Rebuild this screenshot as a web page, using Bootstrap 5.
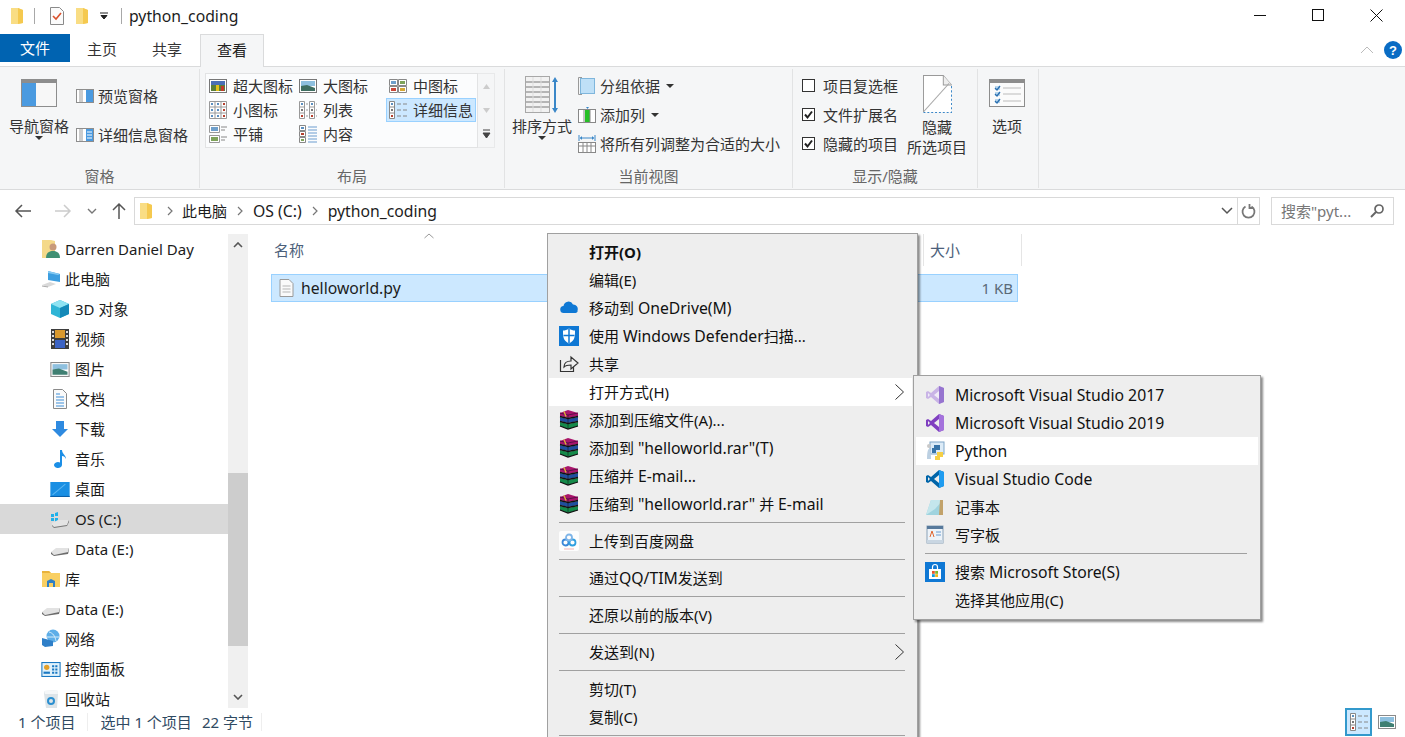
<!DOCTYPE html>
<html lang="zh-CN">
<head>
  <meta charset="UTF-8" />
  <title>python_coding</title>
  <link href="https://cdn.jsdelivr.net/npm/bootstrap@5.3.0/dist/css/bootstrap.min.css" rel="stylesheet">
  <style>
    html, body { height: 737px; overflow: hidden; }
    body { position: relative; background: #fff; color: #1c1c1c; font: 15px/20px "Noto Sans", "Noto Sans CJK SC", sans-serif; }
    svg { display: block; flex: none; }
    .lat { font-size: 15.75px; }

    .title-bar { height: 34px; padding-bottom: 3px; }
    .qa-sep { width: 1px; height: 16px; background: #a8a8a8; }
    .qa-folder1 { margin-left: 10px; }
    .qa-sep1 { margin-left: 10px; }
    .qa-check { margin-left: 14px; }
    .qa-folder2 { margin-left: 10px; }
    .qa-drop { margin-left: 11px; }
    .qa-sep2 { margin-left: 13px; }
    .win-title { margin-left: 7px; }
    .win-btn { width: 58px; }
    .tab-row { height: 32px; }
    .tab-file { width: 70px; height: 28px; background: #0063b1; color: #fff; }
    .tab-plain { height: 30px; color: #333; }
    .tab-home { margin-left: 17px; }
    .tab-share { margin-left: 35px; }
    .tab-on { width: 64px; height: 33px; margin-left: 18px; padding-bottom: 2px; background: #f5f6f7; border: 1px solid #dadbdc; border-bottom: 0; position: relative; z-index: 1; color: #222; }
    .tab-tools { height: 28px; margin-top: 2px; }
    .help-btn { margin: 0 3px 0 10px; }

    .ribbon { height: 124px; background: #f5f6f7; border-top: 1px solid #dadbdc; border-bottom: 1px solid #dadbdc; color: #333; }
    .rb-group { display: flex; flex-direction: column; border-right: 1px solid #e2e3e4; margin-top: 2px; height: 119px; }
    .rb-body { height: 97px; display: flex; }
    .rb-label { height: 22px; line-height: 20px; text-align: center; color: #666; }
    .g-pane { width: 200px; } .g-layout { width: 305px; } .g-view { width: 288px; } .g-show { width: 185px; } .g-opt { width: 61px; }
    .big-btn { width: 60px; display: flex; flex-direction: column; align-items: center; white-space: nowrap; }
    .big-nav { margin-left: 9px; padding-top: 10px; }
    .big-nav svg, .big-opt svg { margin-bottom: 9px; }
    .big-sort { margin-left: 7px; padding-top: 7px; }
    .big-sort svg { margin-bottom: 2px; }
    .big-hide { margin-left: 9px; padding-top: 6px; }
    .big-hide svg { margin-bottom: 4px; }
    .big-opt { width: 58px; padding-top: 10px; }
    .rb-caret { width: 0; height: 0; border: 4px solid transparent; border-top-color: #333; border-bottom: 0; }
    .small-row .rb-caret { margin-left: 2px; }
    .pane-col { margin-left: 7px; padding-top: 17px; }
    .pane-row + .pane-row { margin-top: 19px; }
    .view-col { margin-left: 6px; padding-top: 2px; }
    .check-col { margin-left: 9px; padding-top: 2px; }
    .small-row { height: 29px; display: flex; align-items: center; white-space: nowrap; }
    .gallery { width: 273px; height: 75px; margin: 4px 0 0 5px; background: #fbfcfd; border: 1px solid #e2e3e4; display: grid; grid-template-columns: 90px 90px 90px; grid-auto-rows: 24px; }
    .gal-item { display: flex; align-items: center; gap: 6px; padding-left: 2px; white-space: nowrap; border: 1px solid transparent; }
    .gal-item.picked { background: #cce8ff; border-color: #99d1ff; }
    .gal-scroll { width: 17px; height: 75px; margin-top: 4px; border: 1px solid #e8e9ea; border-left: 0; }

    .addr-row { height: 38px; padding-top: 7px; }
    .addr-btns { width: 134px; height: 28px; }
    .btn-back { margin-left: 14px; }
    .btn-fwd { margin-left: 22px; }
    .btn-hist { margin-left: 15px; }
    .btn-up { margin-left: 15px; }
    .addr-box { width: 1126px; height: 28px; border: 1px solid #d9d9d9; }
    .crumb-first { margin: 0 9px 0 14px; }
    .crumb-next { margin: 0 10px; }
    .addr-drop { margin-right: 4px; }
    .addr-refresh { width: 22px; height: 26px; border-left: 1px solid #d9d9d9; }
    .search-box { width: 123px; height: 28px; margin-left: 11px; padding-left: 9px; border: 1px solid #d9d9d9; color: #777; }

    .main-row { height: 480px; }
    .nav-pane { width: 228px; padding-top: 6px; }
    .nav-item { height: 30px; display: flex; align-items: center; white-space: nowrap; }
    .lv1 { padding-left: 41px; gap: 4px; }
    .lv2 { padding-left: 50px; gap: 5px; }
    .nav-item.here { background: #d9d9d9; }
    .scroll-col { width: 20px; height: 474px; margin-top: 6px; background: #f0f0f0; }
    .scroll-arrow { height: 22px; }
    .scroll-gap { height: 217px; }
    .scroll-thumb { height: 173px; background: #cdcdcd; }
    .scroll-rest { height: 40px; }

    .file-pane { padding: 6px 0 0 23px; position: relative; }
    .col-head { height: 32px; color: #4c607a; }
    .col-name { width: 652px; padding-left: 3px; }
    .col-size { width: 99px; padding-left: 6px; border-left: 1px solid #e5e5e5; border-right: 1px solid #e5e5e5; }
    .sort-caret { position: absolute; left: 176px; top: 5px; }
    .file-row { width: 747px; height: 28px; margin-top: 8px; background: #cce8ff; border: 1px solid #99d1ff; padding: 0 4px 0 7px; }
    .file-icon { margin-right: 7px; }
    .file-size { color: #5a6a78; }

    .status-bar { height: 29px; padding-bottom: 2px; color: #2f4a62; white-space: nowrap; }
    .st-count { margin-left: 18px; }
    .st-sep { width: 1px; height: 18px; background: #eee; }
    .st-sep1 { margin: 0 12px; }
    .st-bytes { margin-left: 10px; }
    .view-on { width: 27px; height: 28px; background: #cce8ff; border: 2px solid #3399cc; }
    .view-pic { margin: 0 9px 0 6px; }

    .ctx-menu { position: absolute; background: #eee; border: 1px solid #a0a0a0; box-shadow: 2px 2px 2px rgba(0,0,0,.45); color: #111; white-space: nowrap; }
    .menu-main { left: 547px; top: 233px; width: 371px; padding: 4px 1px; }
    .menu-sub { left: 913px; top: 375px; width: 348px; padding: 5px 2px; z-index: 2; }
    .menu-row { height: 28px; display: flex; align-items: center; }
    .menu-main .menu-row { padding-left: 10px; }
    .menu-sub .menu-row { padding-left: 9px; }
    .menu-row.hot { background: #fff; }
    .menu-icon { width: 20px; height: 20px; flex: none; margin-right: 10px; }
    .menu-arrow { margin-left: auto; margin-right: 12px; }
    .menu-sep { height: 1px; background: #a0a0a0; margin: 4px 11px 4px 10px; }
    .menu-sub .menu-sep { margin-left: 9px; }
    .menu-main .hot { margin-right: 4px; }
    .menu-main .hot .menu-arrow { margin-right: 8px; }
  </style>
</head>
<body>
  <svg width="0" height="0" class="position-absolute">
    <defs>
      <symbol id="i-folder" viewBox="0 0 14 18"><path d="M1 1h7l5 2v13l-5 1H1z" fill="#f9dd84"/><path d="M8 1l5 2v13l-5 1z" fill="#f5c94f"/></symbol>
      <symbol id="i-check" viewBox="0 0 16 20"><path d="M1.500 1.500h9l4 4v13h-13z" fill="#fbfbfb" stroke="#8a8a8a"/><path d="M4 10l3 3 5-6" fill="none" stroke="#d9512c" stroke-width="1.600"/></symbol>
      <symbol id="i-lpane" viewBox="0 0 36 28"><rect x=".5" y=".5" width="35" height="27" fill="#f4f4f4" stroke="#8d8d8d"/><rect x="1" y="1" width="34" height="3" fill="#8d8d8d"/><rect x="1" y="4" width="14" height="23" fill="#4a9ae0"/><rect x="15" y="4" width="20" height="23" fill="#f7f7f7"/></symbol>
      <symbol id="i-rpane" viewBox="0 0 18 14"><rect x=".5" y=".5" width="17" height="13" fill="#fff" stroke="#8d8d8d"/><path d="M6 1v12M4 1v12" stroke="#9a9a9a"/><rect x="10" y="1" width="7" height="12" fill="#4a9ae0"/></symbol>
      <symbol id="i-dpane" viewBox="0 0 18 14"><rect x=".5" y=".5" width="17" height="13" fill="#fff" stroke="#8d8d8d"/><path d="M6 1v12M4 1v12" stroke="#9a9a9a"/><rect x="10" y="1" width="7" height="12" fill="#4a9ae0"/><path d="M11 4h5M11 7h5M11 10h5" stroke="#fff"/></symbol>
      <symbol id="g-xl" viewBox="0 0 18 14"><rect x=".5" y=".5" width="17" height="13" fill="#fff" stroke="#777"/><rect x="2" y="2" width="14" height="10" fill="#5a7f3a"/><path d="M2 2h14v4H2z" fill="#4a6fb5"/><path d="M7 12V6h3v6z" fill="#e2c21a"/><rect x="12" y="7" width="3" height="5" fill="#c43a2b"/></symbol>
      <symbol id="g-lg" viewBox="0 0 18 14"><rect x=".5" y=".5" width="17" height="13" fill="#fff" stroke="#777"/><rect x="2" y="2" width="14" height="5" fill="#8ec0df"/><path d="M2 7l6-1 8 3v3H2z" fill="#3f6f62"/></symbol>
      <symbol id="g-md" viewBox="0 0 18 14"><path d="M.5.500h8v6h-8zM9.500.500h8v6h-8zM.5 7.500h8v6h-8zM9.500 7.500h8v6h-8z" fill="#fff" stroke="#888"/><path d="M2 2h5v3H2z" fill="#6e9fcb"/><path d="M11 2h5v3h-5z" fill="#7ea35a"/><path d="M2 9h5v3H2z" fill="#c9473a"/><path d="M11 9h5v3h-5z" fill="#d5a733"/></symbol>
      <symbol id="g-sm" viewBox="0 0 18 18"><path d="M.5.500h17v17H.5z" fill="#fff" stroke="#999"/><path d="M6 0v18M12 0v18M0 6h18M0 12h18" stroke="#999"/><path d="M2 2h2v2H2zM8 2h2v2H8zM2 8h2v2H2zM8 8h2v2H8zM2 14h2v2H2zM8 14h2v2H8z" fill="#5b8fc0"/><path d="M14 2h2v2h-2zM14 8h2v2h-2zM14 14h2v2h-2z" fill="#b5402f"/></symbol>
      <symbol id="g-list" viewBox="0 0 18 18"><path d="M.5.500h5v17h-5zM10.500.500h5v17h-5z" fill="#fff" stroke="#999"/><path d="M1 6h4M1 12h4M11 6h4M11 12h4" stroke="#999"/><path d="M2 2h2v2H2zM12 2h2v2h-2z" fill="#5b8fc0"/><path d="M2 8h2v2H2zM12 8h2v2h-2z" fill="#777"/><path d="M2 14h2v2H2zM12 14h2v2h-2z" fill="#b5402f"/><path d="M7 3h2M7 9h2M7 15h2M17 3h1M17 9h1M17 15h1" stroke="#999"/></symbol>
      <symbol id="g-det" viewBox="0 0 18 18"><path d="M.5.500h5v17h-5z" fill="#fff" stroke="#888"/><path d="M1 6h4M1 12h4" stroke="#888"/><path d="M2 2h2v2H2z" fill="#5b8fc0"/><path d="M2 8h2v2H2z" fill="#777"/><path d="M2 14h2v2H2z" fill="#b5402f"/><path d="M8 3h4M14 3h4M8 9h4M14 9h4M8 15h4M14 15h4" stroke="#888"/></symbol>
      <symbol id="g-tile" viewBox="0 0 18 18"><path d="M.5.500h10v7H.5zM.5 10.500h10v7H.5z" fill="#fff" stroke="#999"/><path d="M2 2h7v4H2z" fill="#6e9fcb"/><path d="M2 12h7v4H2z" fill="#7ea35a"/><path d="M12 2h6M12 5h4M12 12h6M12 15h4" stroke="#888"/></symbol>
      <symbol id="g-con" viewBox="0 0 18 18"><path d="M.5.500h6v5h-6zM.5 6.500h6v5h-6zM.5 12.500h6v5h-6z" fill="#fff" stroke="#888"/><path d="M2 2h3v2H2z" fill="#5b8fc0"/><path d="M2 8h3v2H2z" fill="#b5402f"/><path d="M2 14h3v2H2z" fill="#7ea35a"/><path d="M9 2h9M9 5h9M9 8h9M9 11h9M9 14h9M9 17h9" stroke="#6a9ccf"/></symbol>
      <symbol id="i-sort" viewBox="0 0 34 38"><rect x=".5" y=".5" width="24" height="36" fill="#f2f2f2" stroke="#a8a8a8"/><path d="M1 6h23M1 11h23M1 16h23M1 21h23M1 26h23M1 31h23" stroke="#b5b5b5" stroke-width="2"/><path d="M8 1v35M16 1v35" stroke="#ddd"/><path d="M30 3v32" stroke="#3a87c8" stroke-width="2"/><path d="M27 6l3-5 3 5zM27 32l3 5 3-5z" fill="#3a87c8"/></symbol>
      <symbol id="i-group" viewBox="0 0 18 18"><path d="M4 .5H.5v17H4" fill="none" stroke="#999"/><rect x="2.500" y="1.500" width="14" height="15" fill="#bfe0f7" stroke="#7fb6dc"/></symbol>
      <symbol id="i-addcol" viewBox="0 0 18 18"><rect x=".5" y="3.500" width="17" height="13" fill="#fff" stroke="#888"/><rect x="7" y="4" width="5" height="12" fill="#26c026"/><path d="M6 4v12M12 4v12" stroke="#888"/><path d="M8 1h3l-1.500 2z" fill="#3a87c8"/></symbol>
      <symbol id="i-fit" viewBox="0 0 18 18"><path d="M1 0v6M17 0v6" stroke="#3a87c8"/><path d="M2 3h14" stroke="#3a87c8"/><path d="M2 3l2-2v4zM16 3l-2-2v4z" fill="#3a87c8"/><rect x=".5" y="7.500" width="17" height="10" fill="#fff" stroke="#888"/><path d="M0 11h18M5 8v10M9 8v10M13 8v10" stroke="#888"/></symbol>
      <symbol id="i-cb-on" viewBox="0 0 13 13"><rect x=".5" y=".5" width="12" height="12" fill="#fff" stroke="#333"/><path d="M3 6.500l2.500 3L10 3.500" fill="none" stroke="#222" stroke-width="2"/></symbol>
      <symbol id="i-cb-off" viewBox="0 0 13 13"><rect x=".5" y=".5" width="12" height="12" fill="#fff" stroke="#333"/></symbol>
      <symbol id="i-hide" viewBox="0 0 30 36" preserveAspectRatio="none"><path d="M.5 35V.5H21l8.500 9V35z" fill="#fff"/><path d="M.5 35V.5H21l8.500 9" fill="none" stroke="#999"/><path d="M21 .5v9h8.500" fill="#eee" stroke="#999"/><path d="M.5 35L27 8" stroke="#aaa"/><path d="M.5 35.500h29V9.500" fill="none" stroke="#3a87c8" stroke-dasharray="2 2"/></symbol>
      <symbol id="i-opts" viewBox="0 0 36 28"><rect x=".5" y=".5" width="35" height="27" fill="#fbfbfb" stroke="#8d8d8d"/><rect x="1" y="1" width="34" height="3" fill="#8d8d8d"/><path d="M14 9h18M14 15h18M14 22h18" stroke="#bbb"/><path d="M6 7h5v4H6zM6 13h5v4H6zM6 20h5v4H6z" fill="#b9d7ee"/><path d="M6 9l2 2 3-4M6 15l2 2 3-4M6 22l2 2 3-4" fill="none" stroke="#2a6fb0" stroke-width="1.300"/></symbol>
      <symbol id="i-user" viewBox="0 0 20 20"><path d="M1 1h9l4 1v16l-4 1H1z" fill="#f4d98a"/><circle cx="12" cy="8" r="3.500" fill="#c89a7a"/><path d="M5 19c0-5 3-7 7-7s7 2 7 7z" fill="#3f8f72"/></symbol>
      <symbol id="i-pc" viewBox="0 0 20 20"><path d="M7 2l12 3v8l-12-2z" fill="#3c9ee0"/><path d="M7 2l12 3-2 1-10-2z" fill="#85c9f2"/><path d="M1 16l8-3 6 2-8 3z" fill="#d9d9d9"/><path d="M1 17l6 1" stroke="#aaa"/></symbol>
      <symbol id="i-3d" viewBox="0 0 20 20"><path d="M10 1l9 4v10l-9 4-9-4V5z" fill="#2fb5d6"/><path d="M10 1l9 4-9 4-9-4z" fill="#8fe3f2"/><path d="M10 9l9-4v10l-9 4z" fill="#1489b8"/></symbol>
      <symbol id="i-video" viewBox="0 0 18 20"><rect width="18" height="20" fill="#3d3d3d"/><rect x="4" y="1" width="10" height="8" fill="#d9992e"/><rect x="4" y="11" width="10" height="8" fill="#3b63c4"/><path d="M1 2h2v2H1zM1 6h2v2H1zM1 10h2v2H1zM1 14h2v2H1zM15 2h2v2h-2zM15 6h2v2h-2zM15 10h2v2h-2zM15 14h2v2h-2z" fill="#ddd"/></symbol>
      <symbol id="i-pic" viewBox="0 0 18 14"><rect x=".5" y=".5" width="17" height="13" fill="#fff" stroke="#8a8a8a"/><rect x="2" y="2" width="14" height="5" fill="#8ec0df"/><path d="M2 7l6-1 8 3v3H2z" fill="#3f7f72"/></symbol>
      <symbol id="i-doc" viewBox="0 0 16 20"><path d="M1.500.5h9l4 4v15h-13z" fill="#fafafa" stroke="#8a8a8a"/><path d="M4 5h4M4 8h8M4 11h8M4 14h8M4 17h8" stroke="#3f8fd8"/></symbol>
      <symbol id="i-down" viewBox="0 0 18 18"><path d="M5 1h8v8h4l-8 8-8-8h4z" fill="#2e8ae0"/></symbol>
      <symbol id="i-music" viewBox="0 0 14 20"><path d="M7 1h2c0 4 4 5 4 9-1-2-2-3-4-3v9a4 3 0 1 1-2-2.600z" fill="#1c8fe6"/></symbol>
      <symbol id="i-desk" viewBox="0 0 18 14"><rect width="18" height="14" fill="#1a8fe3"/><path d="M0 13h18v1H0z" fill="#0a5fa8"/><path d="M2 12L14 2" stroke="#5ab6f2"/></symbol>
      <symbol id="i-osdrive" viewBox="0 0 20 20"><path d="M1 5h3v3H1zM5 4l3-1v4H5zM1 9h3v3H1zM5 9h3v3l-3 1z" fill="#1fb0ea"/><path d="M2 14l6-3h11l-2 5-13 2-2-2z" fill="#e4e4e4"/><path d="M2 16l2 2 13-2 2-5v2l-2 4-13 2-2-2z" fill="#777"/></symbol>
      <symbol id="i-drive" viewBox="0 0 20 20"><path d="M1 13l5-4h13l-1 4-14 3z" fill="#e2e2e2"/><path d="M1 13l3 3 14-3 1-4v2l-1 4-14 2-3-2z" fill="#6c6c6c"/></symbol>
      <symbol id="i-lib" viewBox="0 0 20 18"><path d="M1 1h7l2 2h9v14H1z" fill="#f9cf62"/><path d="M1 1h7l2 2H1z" fill="#e9b33c"/><path d="M6 17v-6l4-2 4 2v6h-2v-4H8v4z" fill="#2e7fc5"/></symbol>
      <symbol id="i-net" viewBox="0 0 20 20"><circle cx="12" cy="7" r="6.500" fill="#5daee8"/><path d="M8 3c4 1 6 4 7 9M6 8h12" stroke="#d5ecfa" fill="none"/><path d="M1 9l11 3v5l-8 1-3-2z" fill="#2f7fc8"/></symbol>
      <symbol id="i-cp" viewBox="0 0 18 14"><rect x=".5" y=".5" width="17" height="13" fill="#dff1fb" stroke="#1a78c2"/><circle cx="5" cy="5" r="2.500" fill="#e3a02b"/><path d="M2 9h6v2H2z" fill="#1a78c2"/><path d="M10 3h2v2h-2zM13 3h2v2h-2zM10 6h2v2h-2zM13 6h2v2h-2zM10 9h2v2h-2zM13 9h2v2h-2z" fill="#1a78c2"/></symbol>
      <symbol id="i-bin" viewBox="0 0 16 20"><path d="M1 2l13-1 1 4-1 14H3L1 5z" fill="#dde4e8"/><path d="M1 2l13-1 1 4H2z" fill="#f5f7f8"/><circle cx="8" cy="12" r="3" fill="none" stroke="#2b8fd0" stroke-width="2"/></symbol>
      <symbol id="i-pyfile" viewBox="0 0 15 18"><path d="M1 .5h9l4 4v13H1z" fill="#fafafa" stroke="#9a9a9a"/><path d="M3.500 7h8M3.500 10h8M3.500 13h8" stroke="#b5b5b5"/></symbol>
      <symbol id="i-onedrive" viewBox="0 0 20 20"><path d="M5 15a3.500 3.500 0 0 1-.5-7 5 5 0 0 1 9.500-1.500 4.500 4.500 0 0 1 4.500 6c.5 1-.5 2.500-2 2.500z" fill="#0f78d4"/></symbol>
      <symbol id="i-defender" viewBox="0 0 20 20"><rect width="20" height="20" fill="#0f78d4"/><path d="M10 2.500c2 1.500 4 2 6 2 0 6 0 10-6 13-6-3-6-7-6-13 2 0 4-.5 6-2z" fill="#fff"/><path d="M10 3v14M4.500 9.500h11" stroke="#0f78d4" stroke-width="1.500"/></symbol>
      <symbol id="i-share" viewBox="0 0 20 20"><path d="M1.500 6v11.500h13V13" fill="none" stroke="#333" stroke-width="1.200"/><path d="M5 13c0-4 3-6 7-6V3l7 6-7 6v-4c-3 0-5 0-7 2z" fill="#eee" stroke="#333" stroke-width="1.200"/></symbol>
      <symbol id="i-rar" viewBox="0 0 20 20"><path d="M1 3l8-3 10 3v3l-10 2-8-2z" fill="#a8156c"/><path d="M1 7l8 2 10-2v4l-10 2-8-2z" fill="#1f4f9e"/><path d="M1 12l8 2 10-2v4l-10 3-8-3z" fill="#158a4a"/><path d="M1 3l8 2 10-2" fill="none" stroke="#5a1048"/><path d="M1 6.500l8 2 10-2M1 11.500l8 2 10-2M1 16l8 3 10-3" fill="none" stroke="#111" stroke-width="1.300"/><path d="M9 5v14" stroke="#111" stroke-opacity=".5"/><path d="M5 1.500l2 5" stroke="#e0b838" stroke-width="1.300"/></symbol>
      <symbol id="i-baidu" viewBox="0 0 20 20"><rect width="20" height="20" rx="2" fill="#fdfdfd"/><circle cx="6.500" cy="11.500" r="3" fill="none" stroke="#3a87d8" stroke-width="1.800"/><circle cx="13.500" cy="11.500" r="3" fill="none" stroke="#2f9fe0" stroke-width="1.800"/><circle cx="10" cy="6.500" r="3" fill="none" stroke="#7fb5e8" stroke-width="1.800"/><path d="M5 18h10" stroke="#f3b3b3"/></symbol>
      <symbol id="i-vs17" viewBox="0 0 20 20"><path d="M14 1l5 2v14l-5 2-8-7-3 2-2-1V7l2-1 3 2z" fill="#c9b4e6"/><path d="M14 1l5 2v14l-5 2z" fill="#9674cf"/><path d="M14 6v8l-5-4z" fill="#f0ecf7"/><path d="M3 8l2 2-2 2z" fill="#f0ecf7"/></symbol>
      <symbol id="i-vs19" viewBox="0 0 20 20"><path d="M14 1l5 2v14l-5 2-8-7-3 2-2-1V7l2-1 3 2z" fill="#7f3fc0"/><path d="M14 1l5 2v14l-5 2z" fill="#a472dc"/><path d="M14 6v8l-5-4z" fill="#eee"/><path d="M3 8l2 2-2 2z" fill="#eee"/></symbol>
      <symbol id="i-python" viewBox="0 0 20 20"><rect x="5" y="1" width="14" height="12" fill="#dcebf7" stroke="#7ea6c8"/><path d="M9 7V4h6v5h-4v3H7V7z" fill="#3874a8"/><path d="M12 11h6v5h-3v3h-5v-4h2z" fill="#f5cf45"/><circle cx="4" cy="5" r="2" fill="#c9c9c9"/><path d="M2 18c0-7 1-10 2-10s2 3 2 10z" fill="#bcd0e2"/></symbol>
      <symbol id="i-vscode" viewBox="0 0 20 20"><path d="M14 1l5 2v14l-5 2-8-7-3 2-2-1V7l2-1 3 2z" fill="#0065a9"/><path d="M14 1l5 2v14l-5 2z" fill="#1f9cf0"/><path d="M14 6v8l-5-4z" fill="#eee"/><path d="M3 8l2 2-2 2z" fill="#eee"/></symbol>
      <symbol id="i-notepad" viewBox="0 0 20 20"><path d="M6 3h12v15H1z" fill="#9fd3de"/><path d="M6 3h12L10 12 1 18z" fill="#c4e6ec"/><path d="M15 3h3v15h-4z" fill="#c2a26a"/></symbol>
      <symbol id="i-wordpad" viewBox="0 0 18 20"><rect x="1" y="1" width="16" height="17" fill="#edf3f9" stroke="#8aa2b8"/><rect x="1" y="1" width="16" height="3" fill="#57799b"/><path d="M4 12l2-6 2 6" fill="none" stroke="#e0662f"/><path d="M10 7h5M10 10h5" stroke="#6a9ccf"/><path d="M1 15h16v3H1z" fill="#c9d6e2"/></symbol>
      <symbol id="i-store" viewBox="0 0 20 20"><rect width="20" height="20" fill="#0f78d4"/><path d="M4 7h12v10H4z" fill="#fff"/><path d="M7.500 7V5a2.500 2.500 0 0 1 5 0v2" fill="none" stroke="#fff" stroke-width="1.200"/><path d="M7 9h2.800v2.800H7z" fill="#e8552b"/><path d="M10.200 9H13v2.800h-2.800z" fill="#7cb82f"/><path d="M7 12.200h2.800V15H7z" fill="#0f9ae0"/><path d="M10.200 12.200H13V15h-2.800z" fill="#f6b516"/></symbol>
    </defs>
  </svg>

  <!-- title bar -->
  <div class="title-bar d-flex align-items-center">
    <svg width="14" height="18" class="qa-folder1"><use href="#i-folder"/></svg>
    <span class="qa-sep qa-sep1"></span>
    <svg width="16" height="20" class="qa-check"><use href="#i-check"/></svg>
    <svg width="14" height="18" class="qa-folder2"><use href="#i-folder"/></svg>
    <svg width="8" height="8" viewBox="0 0 8 8" class="qa-drop"><path d="M0 1h8M1 3.500h6L4 7z" stroke="#222" fill="#222"/></svg>
    <span class="qa-sep qa-sep2"></span>
    <span class="win-title text-nowrap lat">python_coding</span>
    <div class="ms-auto d-flex align-items-center justify-content-center">
      <div class="win-btn d-flex justify-content-center"><svg width="13" height="13" viewBox="0 0 13 13"><path d="M0 6.500h12" stroke="#111"/></svg></div>
      <div class="win-btn d-flex justify-content-center"><svg width="13" height="13" viewBox="0 0 13 13"><rect x=".5" y=".5" width="11" height="11" fill="none" stroke="#111"/></svg></div>
      <div class="win-btn d-flex justify-content-center"><svg width="13" height="13" viewBox="0 0 13 13"><path d="M.5.500l12 12M12.500.500l-12 12" stroke="#111"/></svg></div>
    </div>
  </div>

  <!-- tabs -->
  <div class="tab-row d-flex align-items-start">
    <div class="tab-file d-flex align-items-center justify-content-center">文件</div>
    <div class="tab-plain tab-home d-flex align-items-center">主页</div>
    <div class="tab-plain tab-share d-flex align-items-center">共享</div>
    <div class="tab-on d-flex align-items-center justify-content-center">查看</div>
    <div class="tab-tools ms-auto d-flex align-items-center">
      <svg width="14" height="8" viewBox="0 0 14 8"><path d="M1 7l6-6 6 6" fill="none" stroke="#bbb"/></svg>
      <svg width="18" height="18" viewBox="0 0 18 18" class="help-btn"><circle cx="9" cy="9" r="9" fill="#0a6cc4"/><text x="9" y="14" font-size="13" font-weight="700" text-anchor="middle" fill="#fff" font-family="Liberation Sans">?</text></svg>
    </div>
  </div>

  <!-- ribbon -->
  <div class="ribbon d-flex">
    <div class="rb-group g-pane">
      <div class="rb-body">
        <div class="big-btn big-nav">
          <svg width="36" height="28"><use href="#i-lpane"/></svg>
          <span>导航窗格</span><span class="rb-caret"></span>
        </div>
        <div class="pane-col">
          <div class="pane-row d-flex align-items-center gap-1 text-nowrap"><svg width="18" height="14"><use href="#i-rpane"/></svg>预览窗格</div>
          <div class="pane-row d-flex align-items-center gap-1 text-nowrap"><svg width="18" height="14"><use href="#i-dpane"/></svg>详细信息窗格</div>
        </div>
      </div>
      <div class="rb-label">窗格</div>
    </div>

    <div class="rb-group g-layout">
      <div class="rb-body">
        <div class="gallery">
          <div class="gal-item"><svg width="18" height="14"><use href="#g-xl"/></svg><span>超大图标</span></div>
          <div class="gal-item"><svg width="18" height="14"><use href="#g-lg"/></svg><span>大图标</span></div>
          <div class="gal-item"><svg width="18" height="14"><use href="#g-md"/></svg><span>中图标</span></div>
          <div class="gal-item"><svg width="18" height="18"><use href="#g-sm"/></svg><span>小图标</span></div>
          <div class="gal-item"><svg width="18" height="18"><use href="#g-list"/></svg><span>列表</span></div>
          <div class="gal-item picked"><svg width="18" height="18"><use href="#g-det"/></svg><span>详细信息</span></div>
          <div class="gal-item"><svg width="18" height="18"><use href="#g-tile"/></svg><span>平铺</span></div>
          <div class="gal-item"><svg width="18" height="18"><use href="#g-con"/></svg><span>内容</span></div>
        </div>
        <div class="gal-scroll d-flex flex-column align-items-center">
          <svg width="9" height="24" viewBox="0 0 9 24"><path d="M1 15l3.500-5 3.500 5z" fill="#ccc"/></svg>
          <svg width="9" height="24" viewBox="0 0 9 24"><path d="M1 10l3.500 5 3.500-5z" fill="#ccc"/></svg>
          <svg width="9" height="24" viewBox="0 0 9 24"><path d="M1 8h7M1 11h7l-3.500 5z" stroke="#444" fill="#444"/></svg>
        </div>
      </div>
      <div class="rb-label">布局</div>
    </div>

    <div class="rb-group g-view">
      <div class="rb-body">
        <div class="big-btn big-sort">
          <svg width="34" height="38"><use href="#i-sort"/></svg>
          <span>排序方式</span><span class="rb-caret"></span>
        </div>
        <div class="view-col">
          <div class="small-row gap-1"><svg width="18" height="18"><use href="#i-group"/></svg>分组依据<span class="rb-caret"></span></div>
          <div class="small-row gap-1"><svg width="18" height="18"><use href="#i-addcol"/></svg>添加列<span class="rb-caret"></span></div>
          <div class="small-row gap-1"><svg width="18" height="18"><use href="#i-fit"/></svg>将所有列调整为合适的大小</div>
        </div>
      </div>
      <div class="rb-label">当前视图</div>
    </div>

    <div class="rb-group g-show">
      <div class="rb-body">
        <div class="check-col">
          <div class="small-row"><svg width="13" height="13" class="me-2"><use href="#i-cb-off"/></svg>项目复选框</div>
          <div class="small-row"><svg width="13" height="13" class="me-2"><use href="#i-cb-on"/></svg>文件扩展名</div>
          <div class="small-row"><svg width="13" height="13" class="me-2"><use href="#i-cb-on"/></svg>隐藏的项目</div>
        </div>
        <div class="big-btn big-hide">
          <svg width="29" height="38"><use href="#i-hide"/></svg>
          <span>隐藏</span><span>所选项目</span>
        </div>
      </div>
      <div class="rb-label">显示/隐藏</div>
    </div>

    <div class="rb-group g-opt">
      <div class="rb-body">
        <div class="big-btn big-opt">
          <svg width="36" height="28"><use href="#i-opts"/></svg>
          <span>选项</span>
        </div>
      </div>
    </div>
  </div>

  <!-- address row -->
  <div class="addr-row d-flex align-items-start">
    <div class="addr-btns d-flex align-items-center">
      <svg width="18" height="14" viewBox="0 0 18 14" class="btn-back"><path d="M17 7H2M8 1L2 7l6 6" fill="none" stroke="#555" stroke-width="1.500"/></svg>
      <svg width="18" height="14" viewBox="0 0 18 14" class="btn-fwd"><path d="M1 7h15M10 1l6 6-6 6" fill="none" stroke="#ccc" stroke-width="1.500"/></svg>
      <svg width="10" height="6" viewBox="0 0 10 6" class="btn-hist"><path d="M1 1l4 4 4-4" fill="none" stroke="#777" stroke-width="1.400"/></svg>
      <svg width="14" height="18" viewBox="0 0 14 18" class="btn-up"><path d="M7 17V2M1 8l6-6 6 6" fill="none" stroke="#555" stroke-width="1.500"/></svg>
    </div>
    <div class="addr-box d-flex align-items-center">
      <svg width="14" height="18" class="ms-1"><use href="#i-folder"/></svg>
      <svg width="6" height="10" viewBox="0 0 6 10" class="crumb-first"><path d="M1 1l4 4-4 4" fill="none" stroke="#777" stroke-width="1.200"/></svg>
      <span>此电脑</span>
      <svg width="6" height="10" viewBox="0 0 6 10" class="crumb-next"><path d="M1 1l4 4-4 4" fill="none" stroke="#777" stroke-width="1.200"/></svg>
      <span class="lat">OS (C:)</span>
      <svg width="6" height="10" viewBox="0 0 6 10" class="crumb-next"><path d="M1 1l4 4-4 4" fill="none" stroke="#777" stroke-width="1.200"/></svg>
      <span class="lat">python_coding</span>
      <svg width="12" height="8" viewBox="0 0 12 8" class="ms-auto addr-drop"><path d="M1 1l5 5 5-5" fill="none" stroke="#555" stroke-width="1.500"/></svg>
      <div class="addr-refresh d-flex align-items-center justify-content-center">
        <svg width="15" height="16" viewBox="0 0 15 16"><path d="M4.500 3.500a6 6 0 1 0 6 0M8.500 1v4h4" fill="none" stroke="#777" stroke-width="1.800"/></svg>
      </div>
    </div>
    <div class="search-box d-flex align-items-center">
      <span>搜索"pyt...</span>
      <svg width="16" height="16" viewBox="0 0 16 16" class="ms-auto me-2"><circle cx="10" cy="6" r="4" fill="none" stroke="#666" stroke-width="1.700"/><path d="M7 9l-5 5" stroke="#666" stroke-width="2"/></svg>
    </div>
  </div>

  <!-- nav + files -->
  <div class="main-row d-flex">
    <div class="nav-pane">
      <div class="nav-item lv1"><svg width="20" height="20"><use href="#i-user"/></svg>Darren Daniel Day</div>
      <div class="nav-item lv1"><svg width="20" height="20"><use href="#i-pc"/></svg>此电脑</div>
      <div class="nav-item lv2"><svg width="20" height="20"><use href="#i-3d"/></svg>3D 对象</div>
      <div class="nav-item lv2"><svg width="20" height="20"><use href="#i-video"/></svg>视频</div>
      <div class="nav-item lv2"><svg width="20" height="15"><use href="#i-pic"/></svg>图片</div>
      <div class="nav-item lv2"><svg width="20" height="20"><use href="#i-doc"/></svg>文档</div>
      <div class="nav-item lv2"><svg width="20" height="18"><use href="#i-down"/></svg>下载</div>
      <div class="nav-item lv2"><svg width="20" height="20"><use href="#i-music"/></svg>音乐</div>
      <div class="nav-item lv2"><svg width="20" height="15"><use href="#i-desk"/></svg>桌面</div>
      <div class="nav-item lv2 here"><svg width="20" height="20"><use href="#i-osdrive"/></svg>OS (C:)</div>
      <div class="nav-item lv2"><svg width="20" height="20"><use href="#i-drive"/></svg>Data (E:)</div>
      <div class="nav-item lv1"><svg width="20" height="18"><use href="#i-lib"/></svg>库</div>
      <div class="nav-item lv1"><svg width="20" height="20"><use href="#i-drive"/></svg>Data (E:)</div>
      <div class="nav-item lv1"><svg width="20" height="20"><use href="#i-net"/></svg>网络</div>
      <div class="nav-item lv1"><svg width="20" height="15"><use href="#i-cp"/></svg>控制面板</div>
      <div class="nav-item lv1"><svg width="20" height="20"><use href="#i-bin"/></svg>回收站</div>
    </div>
    <div class="scroll-col">
      <div class="scroll-arrow d-flex align-items-center justify-content-center"><svg width="10" height="6" viewBox="0 0 10 6"><path d="M1 5l4-4 4 4" fill="none" stroke="#555" stroke-width="1.600"/></svg></div>
      <div class="scroll-gap"></div>
      <div class="scroll-thumb"></div>
      <div class="scroll-rest"></div>
      <div class="scroll-arrow d-flex align-items-center justify-content-center"><svg width="10" height="6" viewBox="0 0 10 6"><path d="M1 1l4 4 4-4" fill="none" stroke="#555" stroke-width="1.600"/></svg></div>
    </div>
    <div class="file-pane flex-grow-1">
      <svg class="sort-caret" width="10" height="6" viewBox="0 0 10 6"><path d="M.5 5l4.500-4 4.500 4" fill="none" stroke="#999"/></svg>
      <div class="col-head d-flex align-items-stretch">
        <div class="col-name d-flex align-items-center">名称</div>
        <div class="col-size d-flex align-items-center">大小</div>
      </div>
      <div class="file-row d-flex align-items-center">
        <svg width="15" height="18" class="file-icon"><use href="#i-pyfile"/></svg>
        <span class="lat">helloworld.py</span>
        <span class="ms-auto file-size">1 KB</span>
      </div>
    </div>
  </div>

  <!-- status bar -->
  <div class="status-bar d-flex align-items-center">
    <span class="st-count">1 个项目</span>
    <span class="st-sep st-sep1"></span>
    <span>选中 1 个项目</span>
    <span class="st-bytes">22 字节</span>
    <span class="st-sep ms-2"></span>
    <div class="view-on ms-auto d-flex align-items-center justify-content-center"><svg width="18" height="18"><use href="#g-det"/></svg></div>
    <svg width="18" height="14" class="view-pic"><use href="#i-pic"/></svg>
  </div>

  <!-- context menu -->
  <div class="ctx-menu menu-main">
    <div class="menu-row"><span class="menu-icon"></span><b>打开(O)</b></div>
    <div class="menu-row"><span class="menu-icon"></span>编辑(E)</div>
    <div class="menu-row"><svg class="menu-icon"><use href="#i-onedrive"/></svg><span>移动到 <span class="lat">OneDrive(M)</span></span></div>
    <div class="menu-row"><svg class="menu-icon"><use href="#i-defender"/></svg><span>使用 <span class="lat">Windows Defender</span>扫描...</span></div>
    <div class="menu-row"><svg class="menu-icon"><use href="#i-share"/></svg>共享</div>
    <div class="menu-row hot"><span class="menu-icon"></span>打开方式(H)<svg class="menu-arrow" width="9" height="16" viewBox="0 0 9 16"><path d="M.5.500l8 7.500-8 7.500" fill="none" stroke="#333"/></svg></div>
    <div class="menu-row"><svg class="menu-icon"><use href="#i-rar"/></svg>添加到压缩文件(A)...</div>
    <div class="menu-row"><svg class="menu-icon"><use href="#i-rar"/></svg><span>添加到 <span class="lat">"helloworld.rar"(T)</span></span></div>
    <div class="menu-row"><svg class="menu-icon"><use href="#i-rar"/></svg><span>压缩并 <span class="lat">E-mail...</span></span></div>
    <div class="menu-row"><svg class="menu-icon"><use href="#i-rar"/></svg><span>压缩到 <span class="lat">"helloworld.rar"</span> 并 <span class="lat">E-mail</span></span></div>
    <div class="menu-sep"></div>
    <div class="menu-row"><svg class="menu-icon"><use href="#i-baidu"/></svg>上传到百度网盘</div>
    <div class="menu-sep"></div>
    <div class="menu-row"><span class="menu-icon"></span><span>通过<span class="lat">QQ/TIM</span>发送到</span></div>
    <div class="menu-sep"></div>
    <div class="menu-row"><span class="menu-icon"></span>还原以前的版本(V)</div>
    <div class="menu-sep"></div>
    <div class="menu-row"><span class="menu-icon"></span>发送到(N)<svg class="menu-arrow" width="9" height="16" viewBox="0 0 9 16"><path d="M.5.500l8 7.500-8 7.500" fill="none" stroke="#333"/></svg></div>
    <div class="menu-sep"></div>
    <div class="menu-row"><span class="menu-icon"></span>剪切(T)</div>
    <div class="menu-row"><span class="menu-icon"></span>复制(C)</div>
    <div class="menu-sep"></div>
  </div>

  <!-- open with submenu -->
  <div class="ctx-menu menu-sub">
    <div class="menu-row"><svg class="menu-icon"><use href="#i-vs17"/></svg><span class="lat">Microsoft Visual Studio 2017</span></div>
    <div class="menu-row"><svg class="menu-icon"><use href="#i-vs19"/></svg><span class="lat">Microsoft Visual Studio 2019</span></div>
    <div class="menu-row hot"><svg class="menu-icon"><use href="#i-python"/></svg><span class="lat">Python</span></div>
    <div class="menu-row"><svg class="menu-icon"><use href="#i-vscode"/></svg><span class="lat">Visual Studio Code</span></div>
    <div class="menu-row"><svg class="menu-icon"><use href="#i-notepad"/></svg>记事本</div>
    <div class="menu-row"><svg class="menu-icon"><use href="#i-wordpad"/></svg>写字板</div>
    <div class="menu-sep"></div>
    <div class="menu-row"><svg class="menu-icon"><use href="#i-store"/></svg><span>搜索 <span class="lat">Microsoft Store(S)</span></span></div>
    <div class="menu-row"><span class="menu-icon"></span>选择其他应用(C)</div>
  </div>
</body>
</html>
